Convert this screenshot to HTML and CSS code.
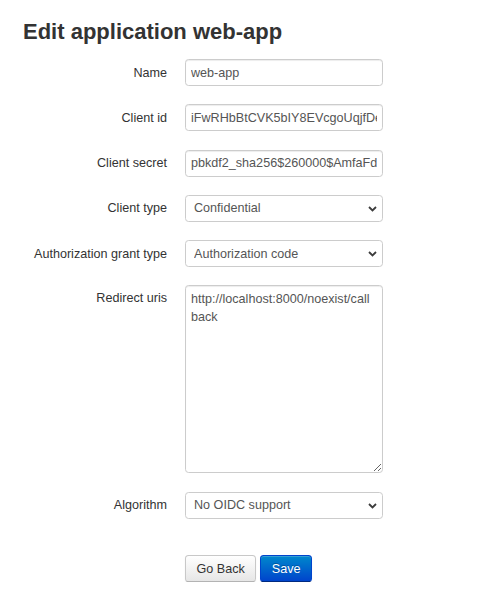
FILE: index.html
```html
<!DOCTYPE html>
<html>
<head>
<meta charset="utf-8">
<title>Edit application web-app</title>
<link rel="stylesheet" href="styles.css">
</head>
<body>
<div class="page">
  <h3 class="title">Edit application web-app</h3>
  <form class="form">
    <div class="row">
      <label class="label">Name</label>
      <input class="field" type="text" value="web-app">
    </div>
    <div class="row">
      <label class="label">Client id</label>
      <input class="field" type="text" value="iFwRHbBtCVK5bIY8EVcgoUqjfDeXw3nTq0LrPz7sKa">
    </div>
    <div class="row">
      <label class="label">Client secret</label>
      <input class="field" type="text" value="pbkdf2_sha256$260000$AmfaFdQk2rT8vXcLpN0eW">
    </div>
    <div class="row">
      <label class="label">Client type</label>
      <div class="select-wrap">
        <select class="field select">
          <option>Confidential</option>
          <option>Public</option>
        </select>
        <svg class="chev" width="9" height="6" viewBox="0 0 9 6"><path d="M1 1 L4.5 4.5 L8 1" fill="none" stroke="#3c3c3c" stroke-width="1.8"/></svg>
      </div>
    </div>
    <div class="row">
      <label class="label">Authorization grant type</label>
      <div class="select-wrap">
        <select class="field select">
          <option>Authorization code</option>
          <option>Implicit</option>
        </select>
        <svg class="chev" width="9" height="6" viewBox="0 0 9 6"><path d="M1 1 L4.5 4.5 L8 1" fill="none" stroke="#3c3c3c" stroke-width="1.8"/></svg>
      </div>
    </div>
    <div class="row row-top">
      <label class="label label-top">Redirect uris</label>
      <textarea class="field area">http://localhost:8000/noexist/callback</textarea>
    </div>
    <div class="row">
      <label class="label">Algorithm</label>
      <div class="select-wrap">
        <select class="field select">
          <option>No OIDC support</option>
          <option>RSA with SHA-2 256</option>
        </select>
        <svg class="chev" width="9" height="6" viewBox="0 0 9 6"><path d="M1 1 L4.5 4.5 L8 1" fill="none" stroke="#3c3c3c" stroke-width="1.8"/></svg>
      </div>
    </div>
    <div class="actions">
      <button type="button" class="btn">Go Back</button>
      <button type="submit" class="btn btn-primary">Save</button>
    </div>
  </form>
</div>
</body>
</html>
```
FILE: styles.css
```css
html, body {
  margin: 0;
  padding: 0;
  background: #ffffff;
}
body {
  font-family: "Liberation Sans", Arial, Helvetica, sans-serif;
  font-size: 12.6px;
  color: #333333;
}
.page {
  padding: 19px 0 0 23px;
}
.title {
  margin: 0;
  font-size: 22px;
  line-height: 26px;
  font-weight: bold;
  color: #333333;
}
.form {
  margin-top: 14px;
  display: flex;
  flex-direction: column;
  gap: 18.25px;
}
.row {
  display: grid;
  grid-template-columns: 144px 198px;
  column-gap: 18px;
  align-items: center;
}
.row-top {
  align-items: start;
}
.label {
  text-align: right;
  line-height: 18px;
  color: #333333;
}
.label-top {
  padding-top: 4px;
}
.field {
  box-sizing: border-box;
  width: 198px;
  height: 27px;
  margin: 0;
  padding: 0 5px;
  border: 1px solid #cccccc;
  border-radius: 3.6px;
  background: #ffffff;
  font-family: "Liberation Sans", Arial, Helvetica, sans-serif;
  font-size: 12.6px;
  color: #555555;
  outline: none;
  box-shadow: inset 0 1px 1px rgba(0,0,0,0.075);
}
.select-wrap {
  position: relative;
  width: 198px;
  height: 27px;
}
.select {
  -webkit-appearance: none;
  appearance: none;
  padding-left: 8px;
  box-shadow: none;
}
.chev {
  position: absolute;
  right: 6px;
  top: 11px;
}
.area {
  height: 188px;
  padding: 4px 9px 4px 5px;
  line-height: 18px;
  resize: vertical;
  overflow: hidden;
}
.actions {
  margin-top: 18.25px;
  padding-left: 162px;
  display: flex;
  gap: 4px;
}
.btn {
  box-sizing: border-box;
  height: 27px;
  padding: 0 10.5px;
  margin: 0;
  font-family: "Liberation Sans", Arial, Helvetica, sans-serif;
  font-size: 12.6px;
  color: #333333;
  border: 1px solid #c8c8c8;
  border-bottom-color: #b3b3b3;
  border-radius: 3.6px;
  background: linear-gradient(to bottom, #ffffff, #e6e6e6);
  box-shadow: inset 0 1px 0 rgba(255,255,255,0.2), 0 1px 2px rgba(0,0,0,0.05);
}
.btn-primary {
  color: #ffffff;
  border-color: #0044cc #0044cc #002a80;
  background: linear-gradient(to bottom, #0088cc, #0044cc);
  text-shadow: 0 -1px 0 rgba(0,0,0,0.25);
}
```
